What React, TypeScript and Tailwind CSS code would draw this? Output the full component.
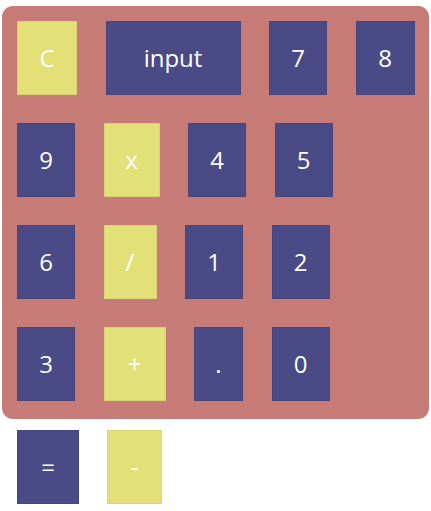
import React from 'react';

type Key = { label: string; w: number; op?: boolean };

const rows: Key[][] = [
  [
    { label: 'C', w: 60, op: true },
    { label: 'input', w: 135 },
    { label: '7', w: 58 },
    { label: '8', w: 59 },
  ],
  [
    { label: '9', w: 58 },
    { label: 'x', w: 56, op: true },
    { label: '4', w: 58 },
    { label: '5', w: 58 },
  ],
  [
    { label: '6', w: 58 },
    { label: '/', w: 53, op: true },
    { label: '1', w: 58 },
    { label: '2', w: 58 },
  ],
  [
    { label: '3', w: 58 },
    { label: '+', w: 62, op: true },
    { label: '.', w: 49 },
    { label: '0', w: 58 },
  ],
];

const CalcKey: React.FC<{ k: Key }> = ({ k }) => (
  <div
    className={`h-[74px] flex items-center justify-center text-white text-[24px] leading-none border border-black/5 ${
      k.op ? 'bg-[#e3e078]' : 'bg-[#4a4a86]'
    }`}
    style={{ width: k.w }}
  >
    {k.label}
  </div>
);

export default function App() {
  return (
    <div className="w-[431px] h-[511px] bg-white" style={{ fontFamily: '"Open Sans", "Noto Sans", sans-serif' }}>
      <div className="pt-[6px] pl-[2px] pr-[2px]">
        <div className="bg-[#c67b76] rounded-[11px] pl-[15px] pt-[15px] pb-[18px] flex flex-col gap-[28px]">
          {rows.map((row, i) => (
            <div key={i} className="flex gap-[28.5px]">
              {row.map((k) => (
                <CalcKey key={k.label} k={k} />
              ))}
            </div>
          ))}
        </div>
      </div>
      <div className="flex gap-[28px] pl-[17px] pt-[11px]">
        <CalcKey k={{ label: '=', w: 62 }} />
        <CalcKey k={{ label: '-', w: 55, op: true }} />
      </div>
    </div>
  );
}
